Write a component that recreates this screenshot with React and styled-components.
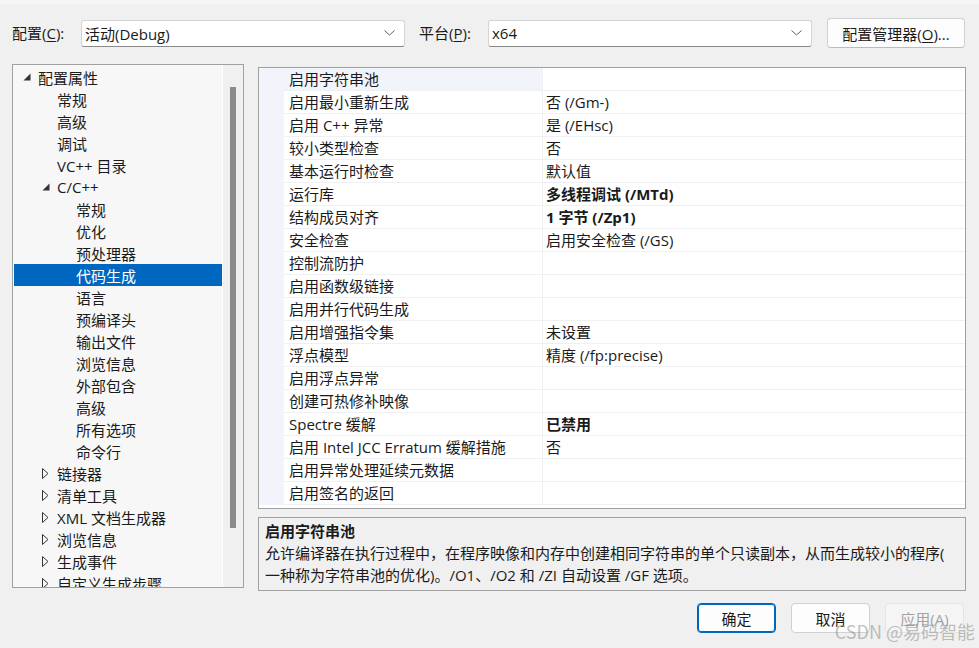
import React from 'react';
import styled, { createGlobalStyle } from 'styled-components';

const GlobalStyle = createGlobalStyle`
  html, body {
    margin: 0;
    padding: 0;
    background: #f0f0f0;
  }
  body {
    font-family: "Segoe UI", "Open Sans", "Noto Sans CJK SC", sans-serif;
    font-size: 15px;
    color: #1a1a1a;
  }
`;

const Window = styled.div`
  position: relative;
  width: 979px;
  height: 648px;
  overflow: hidden;
  background: #f0f0f0;
  border-top: 4px solid #f4f5f9;
  box-sizing: border-box;
`;

const Header = styled.div`
  display: flex;
  align-items: center;
  height: 30px;
  margin-top: 14px;
  padding-left: 12px;
`;

const Label = styled.span`
  width: 69px;
  flex-shrink: 0;
  white-space: nowrap;
  line-height: 20px;
  u { text-decoration: underline; text-underline-offset: 2px; }
`;

const Combo = styled.div`
  width: 324px;
  height: 27px;
  box-sizing: border-box;
  display: flex;
  align-items: center;
  justify-content: space-between;
  padding: 0 9px 0 3px;
  margin-right: ${p => p.$gap || 0}px;
  background: #fff;
  border: 1px solid #d4d4d4;
  border-bottom-color: #8a8a8a;
  border-radius: 3px;
`;

const ManagerButton = styled.button`
  margin-left: 15px;
  width: 138px;
  height: 30px;
  font: inherit;
  color: #1a1a1a;
  background: #fdfdfd;
  border: 1px solid #d0d0d0;
  border-bottom-color: #bcbcbc;
  border-radius: 4px;
  padding: 0;
  u { text-decoration: underline; text-underline-offset: 2px; }
`;

const Main = styled.div`
  display: flex;
  gap: 14px;
  margin-top: 16px;
  padding-left: 12px;
`;

const TreePanel = styled.div`
  width: 232px;
  height: 524px;
  box-sizing: border-box;
  border: 1px solid #a0a0a0;
  display: flex;
  background: #f7f7f7;
`;

const TreeList = styled.div`
  flex: 1;
  overflow: hidden;
  padding: 1px 0 0 1px;
`;

const TreeRow = styled.div`
  display: flex;
  align-items: center;
  height: 22px;
  padding-left: ${p => 8 + p.$level * 19}px;
  white-space: nowrap;
  background: ${p => (p.$selected ? '#0067c0' : 'transparent')};
  color: ${p => (p.$selected ? '#fff' : '#1a1a1a')};
`;

const Arrow = styled.span`
  width: 16px;
  flex-shrink: 0;
  display: flex;
  align-items: center;
  padding-left: 1px;
  box-sizing: border-box;
`;

const ScrollTrack = styled.div`
  width: 21px;
  border-left: 1px solid #fff;
  background: #f0f0f0;
  padding: 22px 0 59px 7px;
  box-sizing: border-box;
  display: flex;
  flex-direction: column;
`;

const Thumb = styled.div`
  width: 6px;
  flex: 1;
  background: #8b8b8b;
`;

const RightCol = styled.div`
  width: 708px;
  margin-top: 3px;
  display: flex;
  flex-direction: column;
  gap: 8px;
`;

const GridPanel = styled.div`
  height: 442px;
  box-sizing: border-box;
  border: 1px solid #a0a0a0;
  background: #fff;
  overflow: hidden;
`;

const GridRow = styled.div`
  display: grid;
  grid-template-columns: 25px 258px 1fr;
  height: 23px;
`;

const Gutter = styled.div`
  background: #f1f5fb;
`;

const Cell = styled.div`
  box-sizing: border-box;
  height: 23px;
  line-height: 22px;
  border-bottom: 1px solid #eef0f3;
  padding-left: ${p => (p.$value ? 3 : 5)}px;
  border-left: ${p => (p.$value ? '1px solid #eef0f3' : 'none')};
  background: ${p => (p.$active ? '#f1f5fb' : '#fff')};
  font-weight: ${p => (p.$bold ? 700 : 400)};
  white-space: nowrap;
  overflow: hidden;
`;

const Description = styled.div`
  height: 74px;
  box-sizing: border-box;
  border: 1px solid #a0a0a0;
  padding: 2px 6px;
  line-height: 22px;
`;

const DescTitle = styled.div`
  font-weight: 700;
`;

const Footer = styled.div`
  display: flex;
  justify-content: flex-end;
  gap: 15px;
  margin-top: 12px;
  padding-right: 15px;
`;

const DialogButton = styled.button`
  width: 79px;
  height: 30px;
  padding: 0;
  font: inherit;
  border-radius: 4px;
  color: ${p => (p.$disabled ? '#a3a3a3' : '#1a1a1a')};
  background: ${p => (p.$disabled ? '#f5f5f5' : '#fdfdfd')};
  border: ${p => (p.$primary ? '1px solid #0067c0' : p.$disabled ? '1px solid #e5e5e5' : '1px solid #d0d0d0')};
  box-shadow: ${p => (p.$primary ? 'inset 0 0 0 1px #0067c0' : 'none')};
`;

const Watermark = styled.div`
  position: absolute;
  right: 4px;
  bottom: 7px;
  font-family: "Noto Sans CJK SC", "Noto Sans", sans-serif;
  font-size: 18px;
  line-height: 20px;
  color: rgba(140, 140, 140, 0.55);
  pointer-events: none;
`;

const Chevron = () => (
  <svg width="11" height="6" viewBox="0 0 11 6">
    <path d="M0.5 0.5 L5.5 5 L10.5 0.5" fill="none" stroke="#606060" strokeWidth="1" />
  </svg>
);

const Expanded = () => (
  <svg width="8" height="8" viewBox="0 0 8 8">
    <polygon points="0.5,7.5 7.5,7.5 7.5,0.5" fill="#333" />
  </svg>
);

const Collapsed = () => (
  <svg width="7" height="11" viewBox="0 0 7 11">
    <polygon points="0.5,0.5 6,5.5 0.5,10.5" fill="none" stroke="#333" strokeWidth="1" />
  </svg>
);

const tree = [
  { label: '配置属性', level: 0, open: true },
  { label: '常规', level: 1 },
  { label: '高级', level: 1 },
  { label: '调试', level: 1 },
  { label: 'VC++ 目录', level: 1 },
  { label: 'C/C++', level: 1, open: true },
  { label: '常规', level: 2 },
  { label: '优化', level: 2 },
  { label: '预处理器', level: 2 },
  { label: '代码生成', level: 2, selected: true },
  { label: '语言', level: 2 },
  { label: '预编译头', level: 2 },
  { label: '输出文件', level: 2 },
  { label: '浏览信息', level: 2 },
  { label: '外部包含', level: 2 },
  { label: '高级', level: 2 },
  { label: '所有选项', level: 2 },
  { label: '命令行', level: 2 },
  { label: '链接器', level: 1, closed: true },
  { label: '清单工具', level: 1, closed: true },
  { label: 'XML 文档生成器', level: 1, closed: true },
  { label: '浏览信息', level: 1, closed: true },
  { label: '生成事件', level: 1, closed: true },
  { label: '自定义生成步骤', level: 1, closed: true },
];

const props = [
  ['启用字符串池', ''],
  ['启用最小重新生成', '否 (/Gm-)'],
  ['启用 C++ 异常', '是 (/EHsc)'],
  ['较小类型检查', '否'],
  ['基本运行时检查', '默认值'],
  ['运行库', '多线程调试 (/MTd)', true],
  ['结构成员对齐', '1 字节 (/Zp1)', true],
  ['安全检查', '启用安全检查 (/GS)'],
  ['控制流防护', ''],
  ['启用函数级链接', ''],
  ['启用并行代码生成', ''],
  ['启用增强指令集', '未设置'],
  ['浮点模型', '精度 (/fp:precise)'],
  ['启用浮点异常', ''],
  ['创建可热修补映像', ''],
  ['Spectre 缓解', '已禁用', true],
  ['启用 Intel JCC Erratum 缓解措施', '否'],
  ['启用异常处理延续元数据', ''],
  ['启用签名的返回', ''],
];

const App = () => {
  return (
    <Window>
      <GlobalStyle />
      <Header>
        <Label>配置(<u>C</u>):</Label>
        <Combo $gap={14}>
          <span>活动(Debug)</span>
          <Chevron />
        </Combo>
        <Label>平台(<u>P</u>):</Label>
        <Combo>
          <span>x64</span>
          <Chevron />
        </Combo>
        <ManagerButton>配置管理器(<u>O</u>)...</ManagerButton>
      </Header>

      <Main>
        <TreePanel>
          <TreeList>
            {tree.map((item, i) => (
              <TreeRow key={i} $level={item.level} $selected={item.selected}>
                <Arrow>
                  {item.open && <Expanded />}
                  {item.closed && <Collapsed />}
                </Arrow>
                {item.label}
              </TreeRow>
            ))}
          </TreeList>
          <ScrollTrack>
            <Thumb />
          </ScrollTrack>
        </TreePanel>

        <RightCol>
          <GridPanel>
            {props.map(([name, value, bold], i) => (
              <GridRow key={i}>
                <Gutter />
                <Cell $active={i === 0}>{name}</Cell>
                <Cell $value $bold={bold}>{value}</Cell>
              </GridRow>
            ))}
          </GridPanel>
          <Description>
            <DescTitle>启用字符串池</DescTitle>
            <div>
              允许编译器在执行过程中，在程序映像和内存中创建相同字符串的单个只读副本，从而生成较小的程序(
              <br />
              一种称为字符串池的优化)。/O1、/O2 和 /ZI 自动设置 /GF 选项。
            </div>
          </Description>
        </RightCol>
      </Main>

      <Footer>
        <DialogButton $primary>确定</DialogButton>
        <DialogButton>取消</DialogButton>
        <DialogButton $disabled>应用(A)</DialogButton>
      </Footer>

      <Watermark>CSDN @易码智能</Watermark>
    </Window>
  );
};

export default App;
